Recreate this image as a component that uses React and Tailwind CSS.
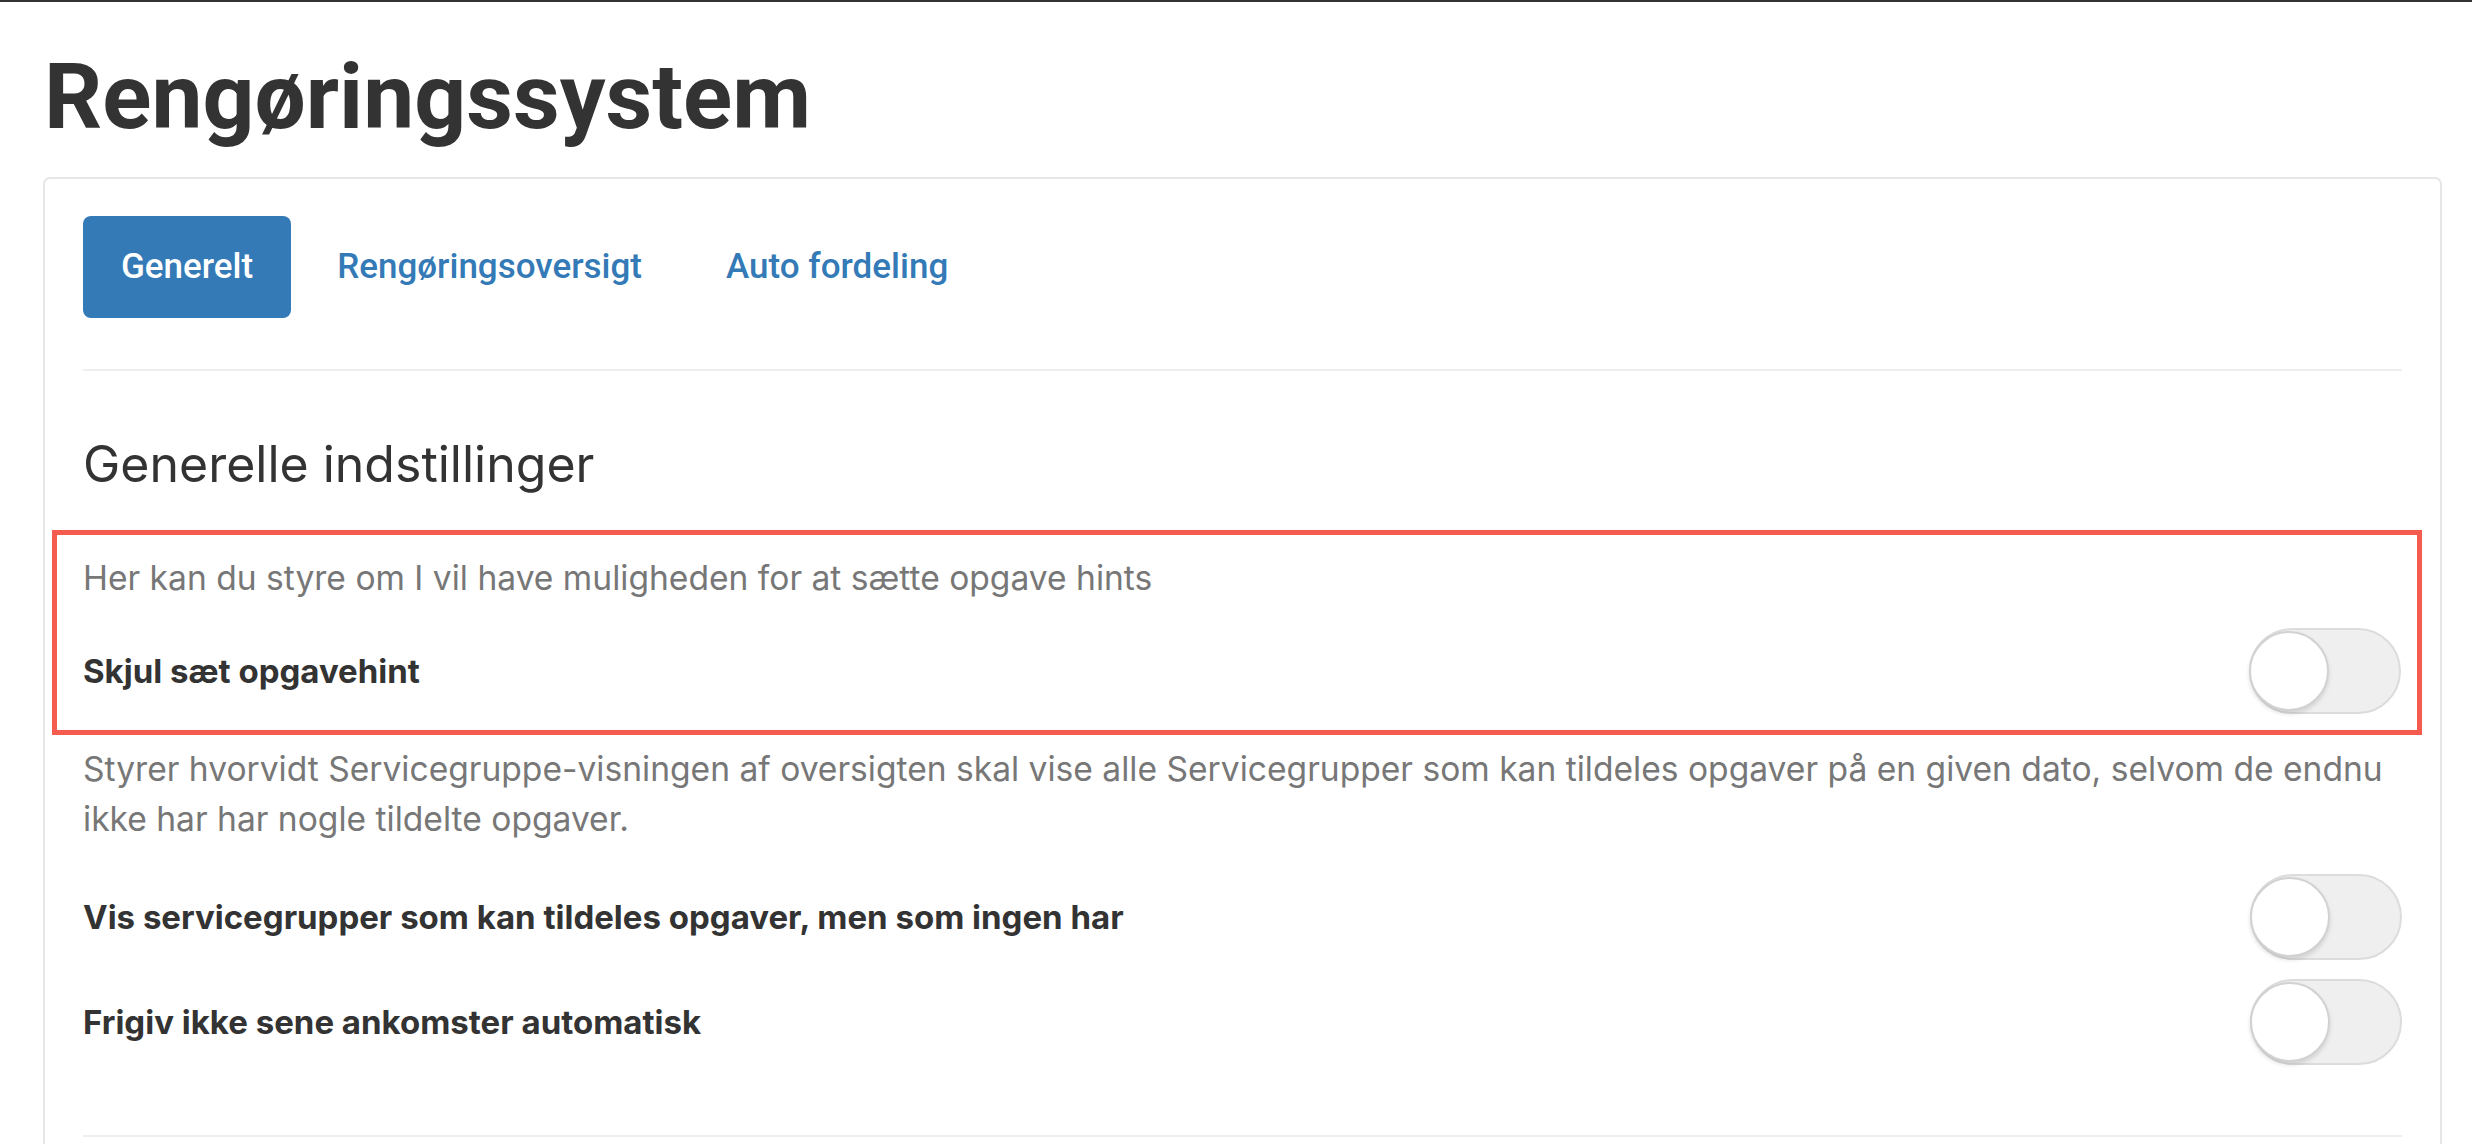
import React from 'react';

const Toggle = () => (
    <div className="relative w-[152px] h-[86px] shrink-0 rounded-full bg-[#efefef] border-2 border-[#dcdcdc]">
        <div className="absolute -left-[2px] top-[1px] w-[80px] h-[80px] rounded-full bg-white border-2 border-[#d2d2d2] shadow-[0_3px_4px_rgba(0,0,0,0.12)]" />
    </div>
);

const tabs = ['Generelt', 'Rengøringsoversigt', 'Auto fordeling'];

const App = () => {
    return (
        <div className="min-h-screen bg-white border-t-2 border-[#333] font-['Roboto',sans-serif] text-[#333]">
            <h1 className="ml-[44px] mt-[45px] text-[91px] leading-[1.1] font-bold">Rengøringssystem</h1>

            <div className="ml-[43px] mr-[30px] mt-[30px] border-2 border-[#e6e6e6] rounded-[7px] px-[38px] pt-[37px] pb-[40px]">
                {/* TABS */}
                <nav className="flex gap-2">
                    {tabs.map((t, i) => (
                        <a
                            key={t}
                            className={
                                i === 0
                                    ? 'h-[102px] px-[38px] flex items-center rounded-[8px] bg-[#337ab7] text-white text-[35px] font-medium'
                                    : 'h-[102px] px-[38px] flex items-center text-[#337ab7] text-[35px] font-medium'
                            }
                        >
                            {t}
                        </a>
                    ))}
                </nav>
                <div className="mt-[51px] h-[2px] bg-[#eeeeee]" />

                <div className="font-['Inter',sans-serif]">
                    <h2 className="mt-[66px] text-[50px] leading-[1.1] font-normal">Generelle indstillinger</h2>

                    {/* highlighted setting */}
                    <div className="mt-[38px] -ml-[31px] -mr-[20px] border-[5px] border-[#f65b50] pl-[26px] pr-[16px] pt-[18px] pb-[16px]">
                        <p className="text-[33.6px] leading-[50px] text-[#777]">
                            Her kan du styre om I vil have muligheden for at sætte opgave hints
                        </p>
                        <div className="mt-[25px] flex items-center justify-between">
                            <span className="text-[33px] leading-[50px] font-bold">Skjul sæt opgavehint</span>
                            <Toggle />
                        </div>
                    </div>

                    <p className="mt-[9px] text-[33.6px] leading-[50px] text-[#777] whitespace-nowrap">
                        Styrer hvorvidt Servicegruppe-visningen af oversigten skal vise alle Servicegrupper som kan tildeles opgaver på en given dato, selvom de endnu
                        <br />
                        ikke har har nogle tildelte opgaver.
                    </p>
                    <div className="mt-[30px] flex items-center justify-between">
                        <span className="text-[33px] leading-[50px] font-bold">Vis servicegrupper som kan tildeles opgaver, men som ingen har</span>
                        <Toggle />
                    </div>
                    <div className="mt-[19px] flex items-center justify-between">
                        <span className="text-[33px] leading-[50px] font-bold">Frigiv ikke sene ankomster automatisk</span>
                        <Toggle />
                    </div>
                </div>
                <div className="mt-[70px] h-[2px] bg-[#eeeeee]" />
            </div>
        </div>
    );
};

export default App;
